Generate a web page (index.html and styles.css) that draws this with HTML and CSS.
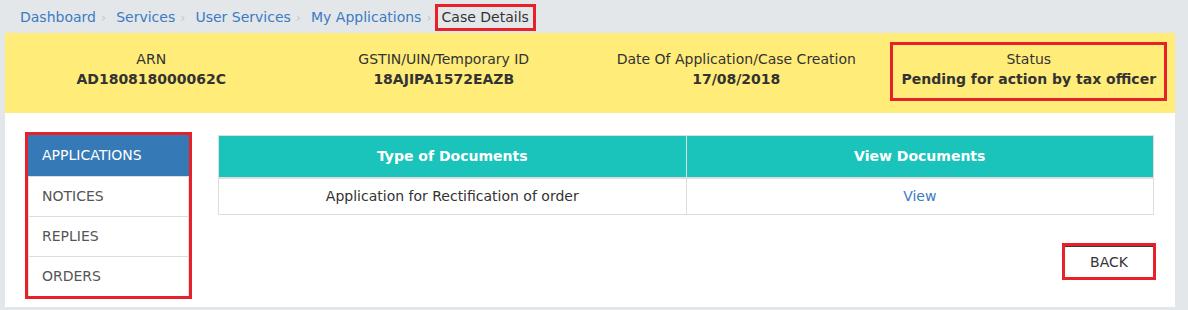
FILE: index.html
```html
<!DOCTYPE html>
<html lang="en">
<head>
  <meta charset="UTF-8">
  <meta name="viewport" content="width=device-width, initial-scale=1.0">
  <title>Case Details</title>
  <link rel="stylesheet" href="styles.css">
</head>
<body>
  <div class="breadcrumb">
    <a href="#">Dashboard</a><span class="sep">›</span><a href="#">Services</a><span class="sep">›</span><a href="#">User Services</a><span class="sep">›</span><a href="#">My Applications</a><span class="sep">›</span><span class="current">Case Details</span>
  </div>

  <div class="panel">
    <div class="case-info">
      <div class="info-cell">
        <div class="info-box">
          <div class="label">ARN</div>
          <div class="value">AD180818000062C</div>
        </div>
      </div>
      <div class="info-cell">
        <div class="info-box">
          <div class="label">GSTIN/UIN/Temporary ID</div>
          <div class="value">18AJIPA1572EAZB</div>
        </div>
      </div>
      <div class="info-cell">
        <div class="info-box">
          <div class="label">Date Of Application/Case Creation</div>
          <div class="value">17/08/2018</div>
        </div>
      </div>
      <div class="info-cell">
        <div class="info-box marked">
          <div class="label">Status</div>
          <div class="value">Pending for action by tax officer</div>
        </div>
      </div>
    </div>

    <div class="case-body">
      <ul class="side-nav">
        <li class="active">APPLICATIONS</li>
        <li>NOTICES</li>
        <li>REPLIES</li>
        <li>ORDERS</li>
      </ul>

      <div class="content">
        <table class="docs">
          <thead>
            <tr>
              <th>Type of Documents</th>
              <th>View Documents</th>
            </tr>
          </thead>
          <tbody>
            <tr>
              <td>Application for Rectification of order</td>
              <td><a href="#">View</a></td>
            </tr>
          </tbody>
        </table>

        <div class="actions">
          <button type="button" class="btn-back">BACK</button>
        </div>
      </div>
    </div>
  </div>
</body>
</html>
```

FILE: styles.css
```css
html, body {
  height: 100%;
}
body {
  margin: 0;
  background-color: #e4e7ea;
  color: #333;
  font-family: 'DejaVu Sans', Verdana, sans-serif;
  font-size: 14px;
  overflow: hidden;
}
a {
  color: #3a7bc2;
  text-decoration: none;
}

/* breadcrumb */
.breadcrumb {
  height: 33px;
  box-sizing: border-box;
  padding: 4px 0 0 20px;
  line-height: 21px;
  white-space: nowrap;
}
.breadcrumb .sep {
  color: #c4c7ca;
  font-size: 13px;
  margin: 0 10px 0 5px;
}
.breadcrumb .current {
  display: inline-block;
  color: #333;
  padding: 0 4px;
  margin: 0 -7px;
  border: 3px solid #e8202a;
}

/* main panel */
.panel {
  margin: 0 13px 0 5px;
  background: #fff;
}
.case-info {
  display: grid;
  grid-template-columns: repeat(4, 1fr);
  background: #ffec79;
  padding: 9px 0 12px;
}
.info-cell {
  text-align: center;
}
.info-box {
  display: inline-block;
  padding: 4px 8px 9px;
  border: 3px solid transparent;
  line-height: 20px;
}
.info-box.marked {
  border-color: #e8202a;
}
.info-box .value {
  font-weight: bold;
}

.case-body {
  display: flex;
  gap: 29px;
  padding: 22px 21px 11px 23px;
}

/* left tabs */
.side-nav {
  list-style: none;
  margin: 0;
  padding: 0;
  width: 161px;
  flex: none;
  align-self: flex-start;
  box-sizing: border-box;
  border: 1px solid #ddd;
  border-top: none;
  border-bottom: none;
  outline: 3px solid #e8202a;
}
.side-nav li {
  line-height: 39px;
  padding: 0 13px;
  color: #555;
  border-top: 1px solid #ddd;
}
.side-nav li:first-child {
  border-top: none;
}
.side-nav li.active {
  background: #3579b6;
  color: #fff;
  line-height: 41px;
  margin: 0 -1px;
  padding: 0 14px;
}

/* documents table */
.content {
  flex: 1;
}
.docs {
  width: 100%;
  border-collapse: collapse;
  border: 1px solid #ddd;
  table-layout: fixed;
}
.docs th,
.docs td {
  text-align: center;
  border: 1px solid #ddd;
  line-height: 17px;
}
.docs th {
  background: #1bc4bb;
  color: #fff;
  font-weight: bold;
  padding: 12px 8px;
  border-bottom: 2px solid #ddd;
}
.docs td {
  padding: 9px 8px;
}

.actions {
  display: flex;
  justify-content: flex-end;
  margin-top: 31px;
}
.btn-back {
  width: 88px;
  height: 31px;
  margin-right: 1px;
  background: #fff;
  color: #333;
  font-family: inherit;
  font-size: 14px;
  border: none;
  border-top: 1px solid #3a3a3a;
  outline: 3px solid #e8202a;
  cursor: pointer;
}
```
